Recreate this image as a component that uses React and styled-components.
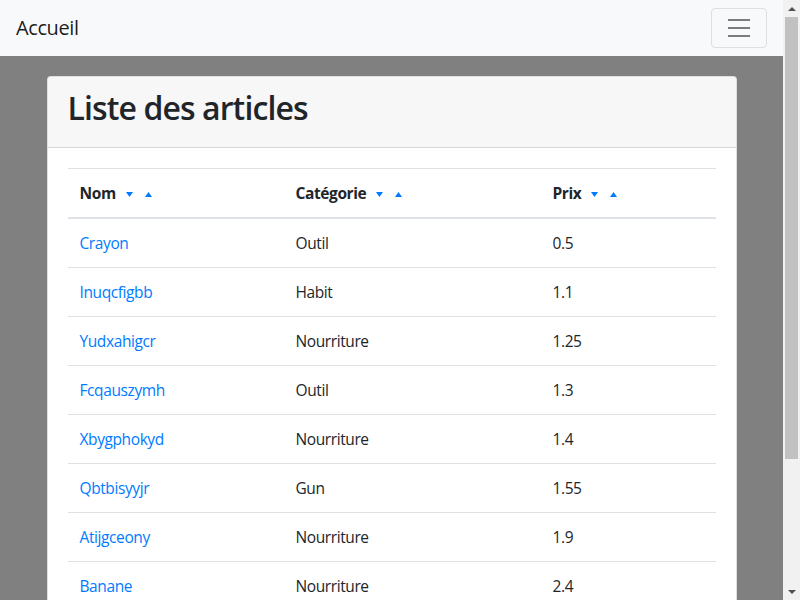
import React from 'react';
import styled, { createGlobalStyle } from 'styled-components';

const GlobalStyle = createGlobalStyle`
  html, body {
    margin: 0;
    padding: 0;
  }
  body {
    background: #808080;
    font-family: "Open Sans", "Liberation Sans", sans-serif;
    font-size: 16px;
    line-height: 1.5;
    color: #212529;
  }
  * {
    box-sizing: border-box;
  }
`;

// the page keeps room for the classic scrollbar drawn on the right
const Page = styled.div`
  margin-right: 17px;
`;

const ScrollTrack = styled.div`
  position: fixed;
  top: 0;
  right: 0;
  width: 17px;
  height: 100vh;
  background: #f1f1f1;
  display: flex;
  flex-direction: column;
  align-items: center;
`;

const ScrollButton = styled.div`
  display: flex;
  align-items: center;
  justify-content: center;
  width: 17px;
  height: 17px;
  flex: none;
`;

const ScrollThumb = styled.div`
  width: 13px;
  height: 442px;
  background: #c1c1c1;
`;

const ScrollSpacer = styled.div`
  flex: 1;
`;

const Navbar = styled.nav`
  display: flex;
  align-items: center;
  justify-content: space-between;
  height: 56px;
  padding: 8px 16px;
  background: #f8f9fa;
`;

const Brand = styled.a`
  font-size: 20px;
  line-height: 30px;
  color: rgba(0, 0, 0, 0.9);
  text-decoration: none;
  letter-spacing: -0.4px;
`;

const Toggler = styled.button`
  display: flex;
  align-items: center;
  justify-content: center;
  width: 56px;
  height: 40px;
  padding: 0;
  background: transparent;
  border: 1px solid rgba(0, 0, 0, 0.1);
  border-radius: 4px;
`;

const Container = styled.div`
  max-width: 720px;
  margin: 0 auto;
  padding: 20px 15px;
`;

const Card = styled.div`
  background: #fff;
  border: 1px solid rgba(0, 0, 0, 0.125);
  border-radius: 4px;
  overflow: hidden;
`;

const CardHeader = styled.div`
  padding: 12px 20px;
  background: rgba(0, 0, 0, 0.03);
  border-bottom: 1px solid rgba(0, 0, 0, 0.125);
`;

const Title = styled.h2`
  margin: 0 0 8px;
  font-size: 32px;
  font-weight: 600;
  line-height: 1.2;
  letter-spacing: -0.9px;
`;

const CardBody = styled.div`
  padding: 20px;
`;

const Table = styled.table`
  width: 100%;
  border-collapse: collapse;
  font-size: 16px;
  line-height: 24px;
`;

const Th = styled.th`
  width: ${p => p.width}px;
  padding: 12px;
  text-align: left;
  font-weight: 700;
  font-size: 15.5px;
  border-top: 1px solid #dee2e6;
  border-bottom: 2px solid #dee2e6;
  letter-spacing: -0.4px;
`;

const Td = styled.td`
  padding: 12px;
  border-top: 1px solid #dee2e6;
  font-size: 15.5px;
  letter-spacing: -0.4px;
`;

const Link = styled.a`
  color: #007bff;
  text-decoration: none;
`;

const SortIcons = styled.span`
  display: inline-flex;
  align-items: center;
  gap: 12px;
  margin-left: 10px;
  vertical-align: 2px;
`;

const Arrow = ({ up }) => (
  <svg width="7" height="5" viewBox="0 0 7 5">
    <path d={up ? 'M3.5 0 L7 5 L0 5 Z' : 'M0 0 L7 0 L3.5 5 Z'} fill="#007bff" />
  </svg>
);

const ScrollArrow = ({ up }) => (
  <svg width="8" height="4" viewBox="0 0 8 4">
    <path d={up ? 'M4 0 L8 4 L0 4 Z' : 'M0 0 L8 0 L4 4 Z'} fill="#505050" />
  </svg>
);

const HamburgerIcon = () => (
  <svg width="30" height="30" viewBox="0 0 30 30">
    <path
      d="M4 7h22M4 15h22M4 23h22"
      stroke="rgba(0,0,0,0.5)"
      strokeWidth="2"
      strokeLinecap="butt"
    />
  </svg>
);

const articles = [
  { nom: 'Crayon', categorie: 'Outil', prix: '0.5' },
  { nom: 'Inuqcfigbb', categorie: 'Habit', prix: '1.1' },
  { nom: 'Yudxahigcr', categorie: 'Nourriture', prix: '1.25' },
  { nom: 'Fcqauszymh', categorie: 'Outil', prix: '1.3' },
  { nom: 'Xbygphokyd', categorie: 'Nourriture', prix: '1.4' },
  { nom: 'Qbtbisyyjr', categorie: 'Gun', prix: '1.55' },
  { nom: 'Atijgceony', categorie: 'Nourriture', prix: '1.9' },
  { nom: 'Banane', categorie: 'Nourriture', prix: '2.4' },
  { nom: 'Lkzwmvtpqe', categorie: 'Habit', prix: '2.75' },
  { nom: 'Marteau', categorie: 'Outil', prix: '3.2' },
];

const columns = [
  { label: 'Nom', width: 216 },
  { label: 'Catégorie', width: 257 },
  { label: 'Prix', width: 175 },
];

export default function App() {
  return (
    <>
      <GlobalStyle />
      <Page>
        <Navbar>
          <Brand href="#">Accueil</Brand>
          <Toggler aria-label="menu">
            <HamburgerIcon />
          </Toggler>
        </Navbar>
        <Container>
          <Card>
            <CardHeader>
              <Title>Liste des articles</Title>
            </CardHeader>
            <CardBody>
              <Table>
                <thead>
                  <tr>
                    {columns.map(col => (
                      <Th key={col.label} width={col.width}>
                        {col.label}
                        <SortIcons>
                          <Arrow />
                          <Arrow up />
                        </SortIcons>
                      </Th>
                    ))}
                  </tr>
                </thead>
                <tbody>
                  {articles.map(a => (
                    <tr key={a.nom}>
                      <Td><Link href="#">{a.nom}</Link></Td>
                      <Td>{a.categorie}</Td>
                      <Td>{a.prix}</Td>
                    </tr>
                  ))}
                </tbody>
              </Table>
            </CardBody>
          </Card>
        </Container>
      </Page>
      <ScrollTrack>
        <ScrollButton><ScrollArrow up /></ScrollButton>
        <ScrollThumb />
        <ScrollSpacer />
        <ScrollButton><ScrollArrow /></ScrollButton>
      </ScrollTrack>
    </>
  );
}
